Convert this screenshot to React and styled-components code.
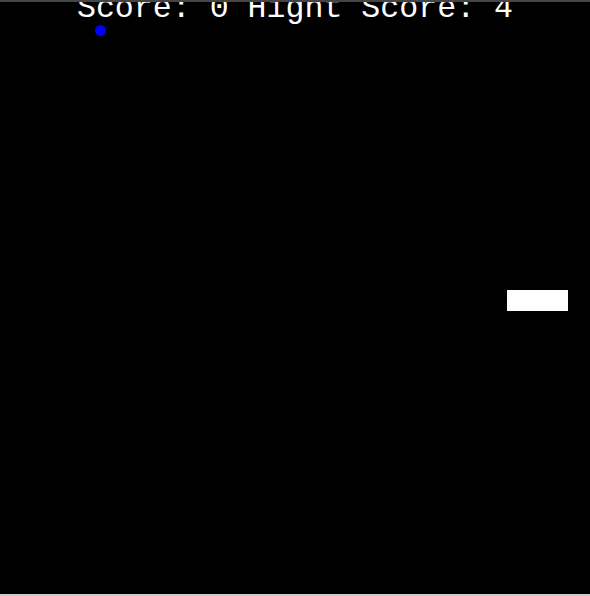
import React from 'react'
import styled, { createGlobalStyle } from 'styled-components'

const Global = createGlobalStyle`
  html, body {
    margin: 0;
    padding: 0;
    background: #cccccc;
  }
`

const Screen = styled.div`
  width: 590px;
  border-top: 2px solid #454545;
`

const Field = styled.div`
  position: relative;
  width: 590px;
  height: 592px;
  background: #000;
  overflow: hidden;
`

const ScoreLine = styled.div`
  margin-top: -9px;
  text-align: center;
  color: #fff;
  font-family: "Liberation Mono", "Courier New", monospace;
  font-size: 31.6px;
  line-height: 31.6px;
  white-space: pre;
`

const Ball = styled.div`
  position: absolute;
  left: ${p => p.x - p.r}px;
  top: ${p => p.y - p.r}px;
  width: ${p => p.r * 2}px;
  height: ${p => p.r * 2}px;
  border-radius: 50%;
  background: #0000ff;
`

const Paddle = styled.div`
  position: absolute;
  left: ${p => p.x}px;
  top: ${p => p.y}px;
  width: 61px;
  height: 21px;
  background: #fff;
`

export default function App() {
  const score = 0
  const high = 4
  return (
    <>
      <Global />
      <Screen>
        <Field>
          <ScoreLine>{`Score: ${score} Hight Score: ${high}`}</ScoreLine>
          <Ball x={100.5} y={28} r={5.5} />
          <Paddle x={507} y={288} />
        </Field>
      </Screen>
    </>
  )
}
